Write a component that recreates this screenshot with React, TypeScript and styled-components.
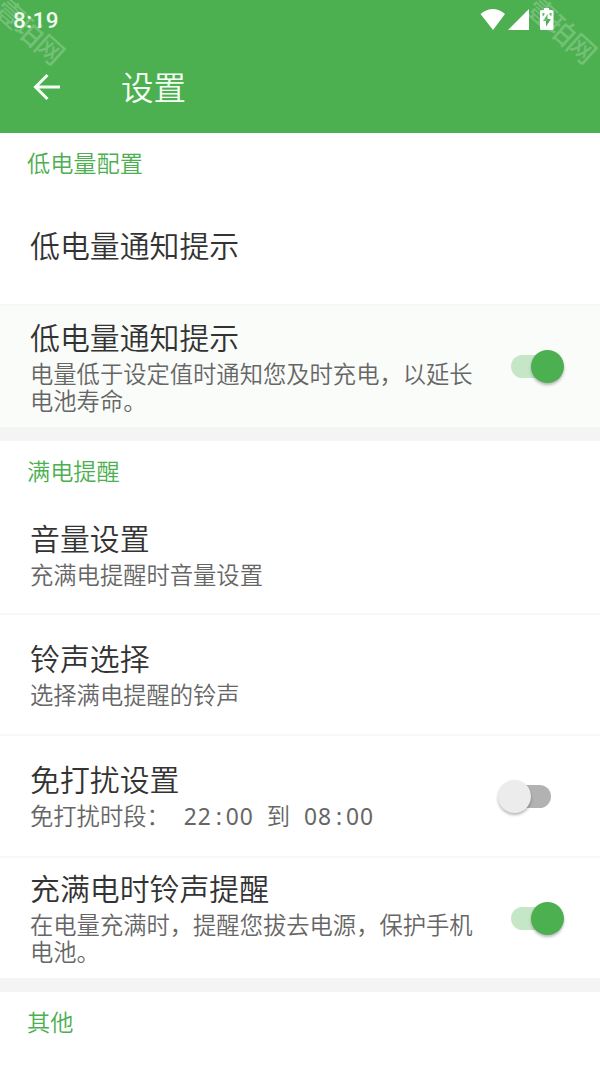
import React from 'react';
import styled, { createGlobalStyle } from 'styled-components';

const Global = createGlobalStyle`
  * { box-sizing: border-box; }
  body { margin: 0; background: #fff; font-family: "Noto Sans CJK SC", sans-serif; font-weight: 350; overflow: hidden; }
`;

const Screen = styled.div`
  width: 600px;
  height: 1066px;
  display: flex;
  flex-direction: column;
  background: #fff;
  overflow: hidden;
`;

const Header = styled.header`
  position: relative;
  height: 133px;
  flex: none;
  background: #4caf50;
  color: #f6fff6;
  overflow: hidden;
`;

const StatusBar = styled.div`
  height: 40px;
  display: flex;
  align-items: center;
  justify-content: space-between;
  padding: 0 46px 0 13px;
`;

const Clock = styled.span`
  font: 500 22.5px/40px Roboto, sans-serif;
  letter-spacing: 0.4px;
  color: #eefbee;
`;

const StatusIcons = styled.svg`
  display: block;
  width: 74px;
  height: 24px;
`;

const AppBar = styled.div`
  height: 93px;
  display: flex;
  align-items: center;
  padding: 0 0 0 33px;
`;

const BackIcon = styled.svg`
  width: 28px;
  height: 28px;
  margin-right: 60px;
`;

const PageTitle = styled.h1`
  margin: 0;
  padding-bottom: 2px;
  font-size: 32.5px;
  line-height: 48px;
  font-weight: 350;
`;

const Watermark = styled.span<{ $left: number; $top: number }>`
  position: absolute;
  left: ${(p) => p.$left}px;
  top: ${(p) => p.$top}px;
  font-size: 28px;
  line-height: 30px;
  letter-spacing: -1px;
  white-space: nowrap;
  font-weight: 500;
  color: rgba(255, 255, 255, 0.22);
  transform: rotate(42deg);
`;

const SectionTitle = styled.h2<{ $height: number }>`
  margin: 0;
  flex: none;
  height: ${(p) => p.$height}px;
  padding: 12px 27px 0;
  font-size: 23.2px;
  line-height: 34px;
  font-weight: 350;
  color: #4caf50;
`;

const Row = styled.div<{ $height: number; $tinted?: boolean; $divider?: boolean }>`
  flex: none;
  height: ${(p) => p.$height}px;
  display: flex;
  align-items: center;
  justify-content: space-between;
  padding: 0 36px 0 30px;
  background: ${(p) => (p.$tinted ? '#fafcf9' : '#fff')};
  border-bottom: ${(p) => (p.$divider ? '2px solid #f7f7f7' : '0')};
`;

const RowText = styled.div`
  width: 450px;
`;

const RowTitle = styled.div<{ $alone?: boolean }>`
  font-size: 29.9px;
  line-height: 32px;
  padding-bottom: ${(p) => (p.$alone ? 3 : 8)}px;
  color: #333;
`;

const RowNote = styled.div`
  font-size: 23.3px;
  line-height: 27px;
  color: #666;
  white-space: pre;
`;

const TimeText = styled.span`
  font-family: "Noto Sans", sans-serif;
  font-weight: 400;
  font-size: 22.8px;
  letter-spacing: 0.95px;
  margin: 0 13px 0 14px;
`;

const Colon = styled.span`
  display: inline-block;
  width: 14px;
  text-align: center;
  letter-spacing: 0;
`;

const Divider = styled.div`
  flex: none;
  height: 14px;
  background: #f4f4f4;
`;

const Track = styled.div<{ $on: boolean }>`
  width: 40px;
  height: 23px;
  border-radius: 12px;
  margin-right: 13px;
  background: ${(p) => (p.$on ? '#c5e7c7' : '#b2b2b2')};
  display: flex;
  align-items: center;
`;

const Thumb = styled.div<{ $on: boolean }>`
  flex: none;
  width: 33px;
  height: 33px;
  border-radius: 50%;
  margin-left: ${(p) => (p.$on ? 20 : -13)}px;
  background: ${(p) => (p.$on ? '#4caf50' : '#ececec')};
  box-shadow: 0 2px 3px rgba(0, 0, 0, 0.28);
`;

const Toggle = ({ on }: { on: boolean }) => (
  <Track $on={on} role="switch" aria-checked={on}>
    <Thumb $on={on} />
  </Track>
);

const Time = ({ hour, minute }: { hour: string; minute: string }) => (
  <TimeText>
    {hour}
    <Colon>:</Colon>
    {minute}
  </TimeText>
);

export default function App() {
  return (
    <Screen>
      <Global />
      <Header>
        <StatusBar>
          <Clock>8:19</Clock>
          <StatusIcons viewBox="0 0 74 24" fill="#fff">
            <path d="M0.5 6Q13 -4 25 6L13 22Z" />
            <path d="M28 22L49 1V22Z" />
            <path d="M61.500 2H64V0h5v2h3a1.500 1.500 0 0 1 1.500 1.500v17a1.500 1.500 0 0 1-1.500 1.500h-10.500a1.500 1.500 0 0 1-1.500-1.500v-17A1.500 1.500 0 0 1 61.500 2Z" />
            <path
              fill="#4caf50"
              d="M67.500 6l-4.500 7h3v5.500l5-7.500h-3.500ZM62.500 5h2v1.800l-2 1.700ZM69.500 5h2v3.500l-2-1.700Z"
            />
          </StatusIcons>
        </StatusBar>
        <AppBar>
          <BackIcon viewBox="0 0 28 28" fill="none" stroke="#f6fff6" strokeWidth="3">
            <path d="M27 14H3M14.500 2L2.500 14L14.500 26" />
          </BackIcon>
          <PageTitle>设置</PageTitle>
        </AppBar>
        <Watermark $left={-10} $top={15}>壹珀网</Watermark>
        <Watermark $left={522} $top={14}>壹珀网</Watermark>
      </Header>

      <SectionTitle $height={54}>低电量配置</SectionTitle>
      <Row $height={119} $divider>
        <RowTitle $alone>低电量通知提示</RowTitle>
      </Row>
      <Row $height={121} $tinted>
        <RowText>
          <RowTitle>低电量通知提示</RowTitle>
          <RowNote>{'电量低于设定值时通知您及时充电，以延长\n电池寿命。'}</RowNote>
        </RowText>
        <Toggle on />
      </Row>
      <Divider />

      <SectionTitle $height={54}>满电提醒</SectionTitle>
      <Row $height={120} $divider>
        <RowText>
          <RowTitle>音量设置</RowTitle>
          <RowNote>充满电提醒时音量设置</RowNote>
        </RowText>
      </Row>
      <Row $height={121} $divider>
        <RowText>
          <RowTitle>铃声选择</RowTitle>
          <RowNote>选择满电提醒的铃声</RowNote>
        </RowText>
      </Row>
      <Row $height={122} $divider>
        <RowText>
          <RowTitle>免打扰设置</RowTitle>
          <RowNote>
            免打扰时段：
            <Time hour="22" minute="00" />到<Time hour="08" minute="00" />
          </RowNote>
        </RowText>
        <Toggle on={false} />
      </Row>
      <Row $height={120}>
        <RowText>
          <RowTitle>充满电时铃声提醒</RowTitle>
          <RowNote>{'在电量充满时，提醒您拔去电源，保护手机\n电池。'}</RowNote>
        </RowText>
        <Toggle on />
      </Row>
      <Divider />
      <SectionTitle $height={74}>其他</SectionTitle>
    </Screen>
  );
}
